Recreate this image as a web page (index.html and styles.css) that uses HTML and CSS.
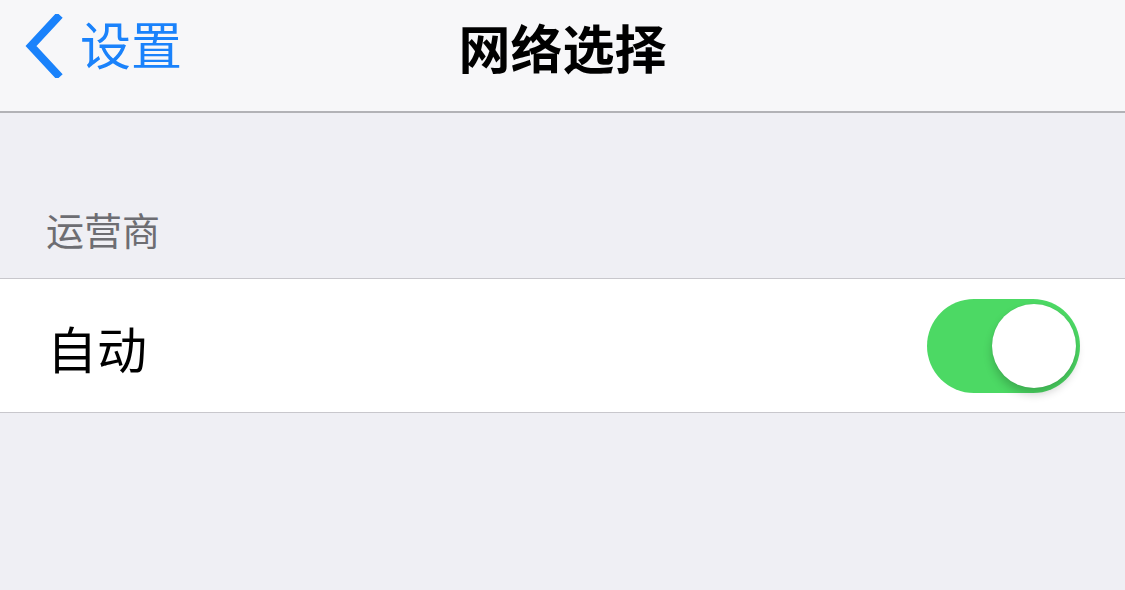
FILE: index.html
```html
<!DOCTYPE html>
<html lang="zh-CN">
<head>
<meta charset="utf-8">
<link rel="stylesheet" href="styles.css">
</head>
<body>
<div class="screen">
  <header class="navbar">
    <div class="back">
      <svg class="chevron" width="40" height="64" viewBox="0 0 40 64">
        <path d="M34 4 L8 32 L34 60" fill="none" stroke="#1a82fb" stroke-width="8" stroke-linecap="square" stroke-linejoin="miter"/>
      </svg>
      <span class="back-label">设置</span>
    </div>
    <h1 class="title">网络选择</h1>
  </header>
  <div class="section-header">运营商</div>
  <div class="group">
    <div class="row">
      <span class="row-label">自动</span>
      <div class="switch"><div class="knob"></div></div>
    </div>
  </div>
</div>
</body>
</html>
```
FILE: styles.css
```css
html, body {
  margin: 0;
  padding: 0;
}
body {
  width: 1125px;
  height: 590px;
  overflow: hidden;
  background: #efeff4;
  font-family: "Noto Sans CJK SC", "Noto Sans", sans-serif;
}
.screen {
  display: flex;
  flex-direction: column;
}
.navbar {
  position: relative;
  height: 111px;
  background: #f7f7f9;
  border-bottom: 2px solid #b2b2b6;
  display: flex;
  align-items: center;
  justify-content: center;
}
.back {
  position: absolute;
  left: 23px;
  top: 14px;
  display: flex;
  align-items: center;
  gap: 17px;
}
.chevron {
  display: block;
}
.back-label {
  color: #1a82fb;
  font-size: 51px;
  line-height: 64px;
  margin-top: -6px;
}
.title {
  margin: 0 0 18px 0;
  font-size: 52px;
  font-weight: 700;
  line-height: 60px;
  color: #000;
}
.section-header {
  height: 165px;
  box-sizing: border-box;
  padding: 91px 0 0 46px;
  font-size: 38px;
  line-height: 50px;
  color: #6d6d72;
}
.group {
  background: #fff;
  border-top: 1px solid #c8c7cc;
  border-bottom: 1px solid #c8c7cc;
}
.row {
  height: 133px;
  display: flex;
  align-items: center;
  justify-content: space-between;
  padding: 0 45px 0 47px;
}
.row-label {
  font-size: 50px;
  line-height: 60px;
  color: #000;
  margin-top: 2px;
}
.switch {
  width: 153px;
  height: 94px;
  border-radius: 47px;
  background: #4cd964;
  display: flex;
  align-items: center;
  justify-content: flex-end;
  padding-right: 4px;
  box-sizing: border-box;
}
.knob {
  width: 84px;
  height: 84px;
  border-radius: 50%;
  background: #fff;
  box-shadow: 0 6px 10px rgba(0,0,0,0.2), 0 0 1px rgba(0,0,0,0.15);
}
```
